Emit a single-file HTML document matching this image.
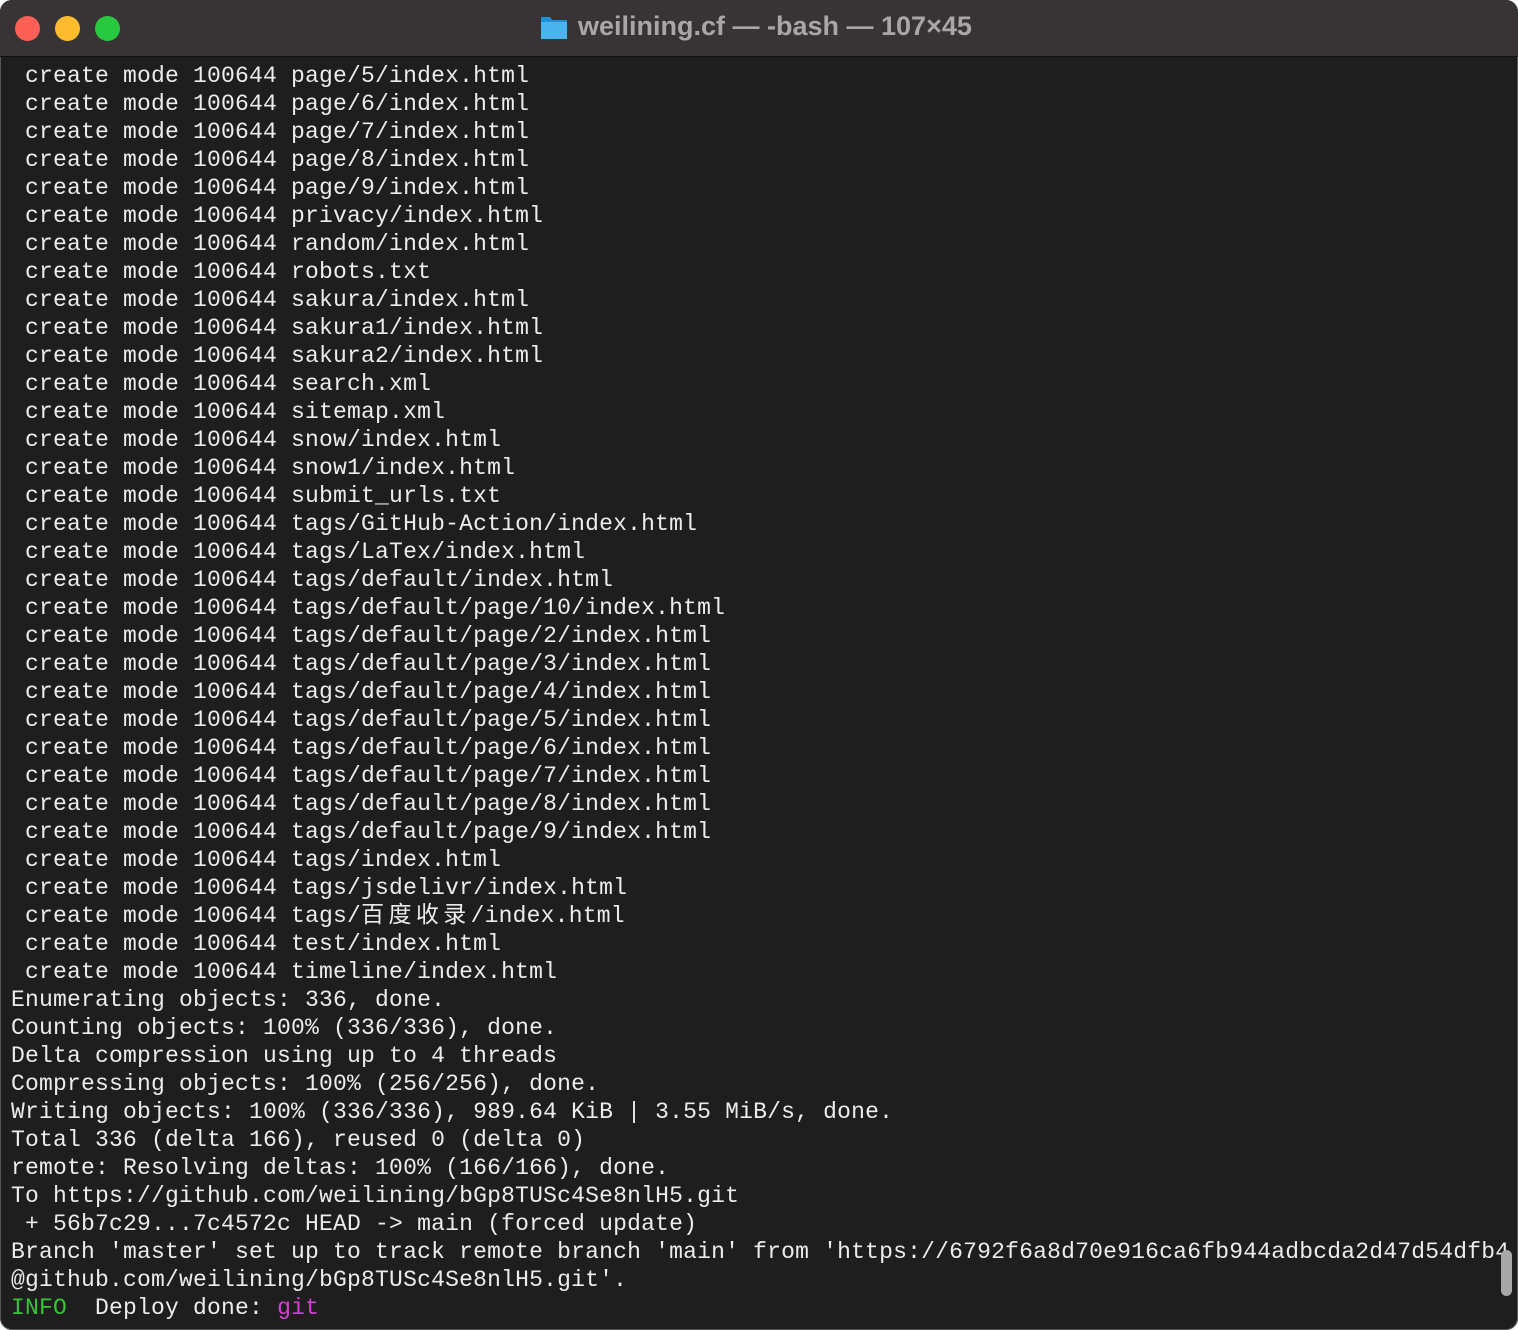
<!DOCTYPE html>
<html><head><meta charset="utf-8"><style>
html,body{margin:0;padding:0;background:#fff;}
.win{position:absolute;left:0;top:0;width:1518px;height:1330px;background:#1e1e1e;border-radius:12px;overflow:hidden;box-shadow:inset 0 0 0 1px #555;}
.title{position:absolute;left:0;top:0;width:1518px;height:56px;background:#383435;border-bottom:1px solid #111;}
.dot{position:absolute;top:16px;width:25px;height:25px;border-radius:50%;}
.tt{position:absolute;left:578px;top:11px;font:bold 27px "Liberation Sans",sans-serif;color:#a9a6a7;letter-spacing:0px;}
.folder{position:absolute;left:540px;top:14px;width:28px;height:26px;}
pre{position:absolute;left:11px;top:62px;margin:0;font-family:"Liberation Mono","Noto Sans CJK SC",monospace;font-size:23px;letter-spacing:0.2px;line-height:28px;color:#ececec;white-space:pre;}
.g{color:#35c535}.m{color:#d63fd6}
.sb{position:absolute;left:1501px;top:1250px;width:11px;height:46px;border-radius:6px;background:#a8a8a8;}
</style></head><body><div class="win">
<div class="title">
<div class="dot" style="left:15px;background:#fe5f57"></div>
<div class="dot" style="left:55px;background:#febc2e"></div>
<div class="dot" style="left:95px;background:#28c840"></div>
<svg class="folder" viewBox="0 0 28 26"><path d="M1 3h9l2 3h15v19H1z" fill="#1f8fd8"/><path d="M1 8h26v17H1z" fill="#4ab4f0"/></svg>
<div class="tt">weilining.cf — -bash — 107×45</div>
</div>
<pre> create mode 100644 page/5/index.html
 create mode 100644 page/6/index.html
 create mode 100644 page/7/index.html
 create mode 100644 page/8/index.html
 create mode 100644 page/9/index.html
 create mode 100644 privacy/index.html
 create mode 100644 random/index.html
 create mode 100644 robots.txt
 create mode 100644 sakura/index.html
 create mode 100644 sakura1/index.html
 create mode 100644 sakura2/index.html
 create mode 100644 search.xml
 create mode 100644 sitemap.xml
 create mode 100644 snow/index.html
 create mode 100644 snow1/index.html
 create mode 100644 submit_urls.txt
 create mode 100644 tags/GitHub-Action/index.html
 create mode 100644 tags/LaTex/index.html
 create mode 100644 tags/default/index.html
 create mode 100644 tags/default/page/10/index.html
 create mode 100644 tags/default/page/2/index.html
 create mode 100644 tags/default/page/3/index.html
 create mode 100644 tags/default/page/4/index.html
 create mode 100644 tags/default/page/5/index.html
 create mode 100644 tags/default/page/6/index.html
 create mode 100644 tags/default/page/7/index.html
 create mode 100644 tags/default/page/8/index.html
 create mode 100644 tags/default/page/9/index.html
 create mode 100644 tags/index.html
 create mode 100644 tags/jsdelivr/index.html
 create mode 100644 tags/<span style="letter-spacing:4.4px">百度收录</span>/index.html
 create mode 100644 test/index.html
 create mode 100644 timeline/index.html
Enumerating objects: 336, done.
Counting objects: 100% (336/336), done.
Delta compression using up to 4 threads
Compressing objects: 100% (256/256), done.
Writing objects: 100% (336/336), 989.64 KiB | 3.55 MiB/s, done.
Total 336 (delta 166), reused 0 (delta 0)
remote: Resolving deltas: 100% (166/166), done.
To https://github.com/weilining/bGp8TUSc4Se8nlH5.git
 + 56b7c29...7c4572c HEAD -&gt; main (forced update)
Branch 'master' set up to track remote branch 'main' from 'https://6792f6a8d70e916ca6fb944adbcda2d47d54dfb4
@github.com/weilining/bGp8TUSc4Se8nlH5.git'.
<span class="g">INFO</span>  Deploy done: <span class="m">git</span></pre>
<div class="sb"></div>
</div></body></html>
